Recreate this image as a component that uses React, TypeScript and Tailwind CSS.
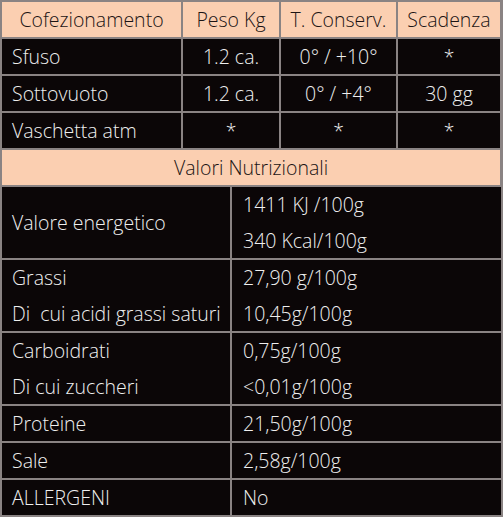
const packs = [
  { name: "Sfuso", peso: "1.2 ca.", temp: "0° / +10°", scad: "*" },
  { name: "Sottovuoto", peso: "1.2 ca.", temp: "0° / +4°", scad: "30 gg" },
  { name: "Vaschetta atm", peso: "*", temp: "*", scad: "*" },
];

const nutri: { labels: string[]; values: string[] }[] = [
  { labels: ["Valore energetico"], values: ["1411 KJ /100g", "340 Kcal/100g"] },
  { labels: ["Grassi", "Di  cui acidi grassi saturi"], values: ["27,90 g/100g", "10,45g/100g"] },
  { labels: ["Carboidrati", "Di cui zuccheri"], values: ["0,75g/100g", "<0,01g/100g"] },
  { labels: ["Proteine"], values: ["21,50g/100g"] },
  { labels: ["Sale"], values: ["2,58g/100g"] },
  { labels: ["ALLERGENI"], values: ["No"] },
];

const head = "bg-[#fbcfb1] text-[#1c1414] flex items-center justify-center h-[35px]";
const dark = "bg-[#0b0607] text-[#efefef] flex items-center h-[35px]";

function Lines({ items, double }: { items: string[]; double: boolean }) {
  if (items.length === 1 && double) {
    return <div className="h-[71px] flex items-center">{items[0]}</div>;
  }
  return (
    <div className="flex flex-col">
      {items.map((t) => (
        <div key={t} className={`flex items-center ${double ? "h-[35.5px]" : "h-[35px]"}`}>
          <span className="whitespace-pre">{t}</span>
        </div>
      ))}
    </div>
  );
}

export default function App() {
  return (
    <div
      className="w-[503px] h-[517px] overflow-hidden bg-[#8a8383] pt-[2px] px-[2px] text-[19.5px] font-light leading-none"
      style={{ fontFamily: '"Open Sans", "Noto Sans", sans-serif' }}
    >
      <div className="grid grid-cols-[179px_96px_115px_102px] gap-[2px]">
        <div className={head}>Cofezionamento</div>
        <div className={head}>Peso Kg</div>
        <div className={head}>T. Conserv.</div>
        <div className={head}>Scadenza</div>
        {packs.map((p) => (
          <div key={p.name} className="contents">
            <div className={`${dark} pl-[10px]`}>{p.name}</div>
            <div className={`${dark} justify-center`}>{p.peso}</div>
            <div className={`${dark} justify-center`}>{p.temp}</div>
            <div className={`${dark} justify-center`}>{p.scad}</div>
          </div>
        ))}
        <div className={`${head} col-span-4`}>Valori Nutrizionali</div>
      </div>
      <div className="grid grid-cols-[228px_1fr] gap-[2px] mt-[2px]">
        {nutri.map((r) => {
          const double = r.values.length > 1 || r.labels.length > 1;
          return (
            <div key={r.labels[0]} className="contents">
              <div className="bg-[#0b0607] text-[#efefef] pl-[10px]">
                <Lines items={r.labels} double={double} />
              </div>
              <div className="bg-[#0b0607] text-[#efefef] pl-[11px]">
                <Lines items={r.values} double={double} />
              </div>
            </div>
          );
        })}
      </div>
    </div>
  );
}
